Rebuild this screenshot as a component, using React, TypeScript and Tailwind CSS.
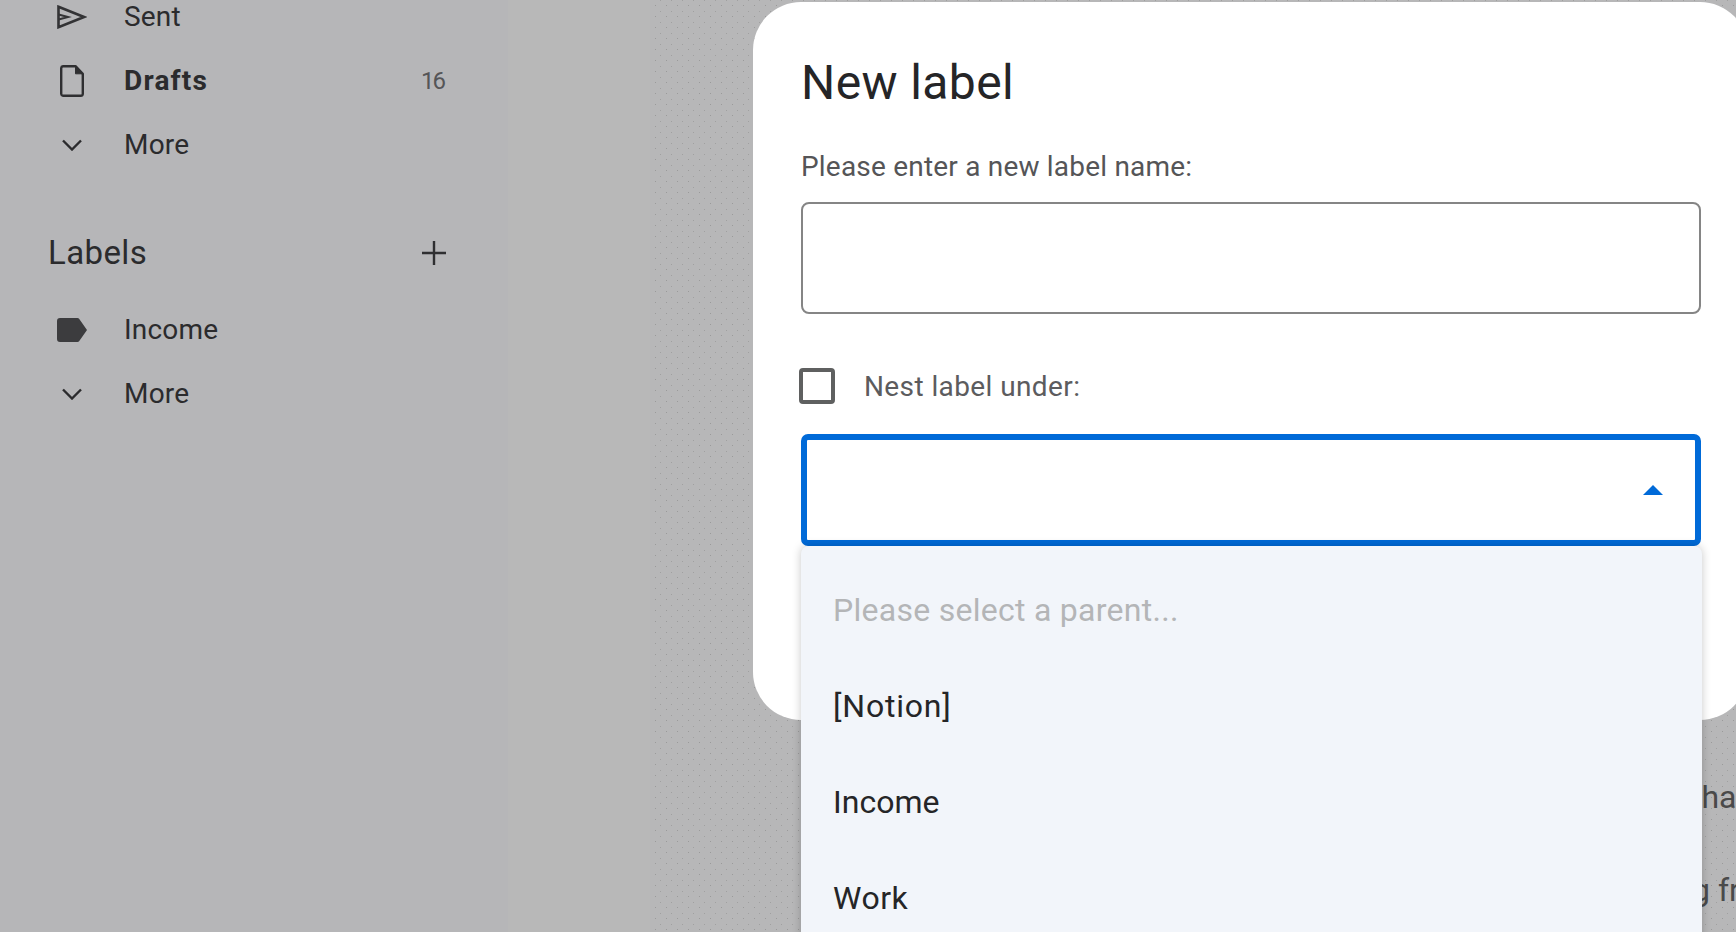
const font = "font-['Roboto','Liberation_Sans',sans-serif]";

function SentIcon() {
  return (
    <svg width="30" height="24" viewBox="0 0 30 24" fill="none" stroke="#333335" strokeWidth="2.6">
      <path d="M1.500 1.800 27 12 1.500 22.200Z" strokeLinejoin="miter" />
      <path d="M1.500 9.500 11 12 1.500 14.500" strokeWidth="2" />
    </svg>
  );
}

function DraftIcon() {
  return (
    <svg width="24" height="32" viewBox="0 0 24 32" fill="none" stroke="#2f2f31" strokeWidth="2.4">
      <path d="M3 1.200h12.500l7.300 7.600V29a2 2 0 0 1-2 1.800H3A2 2 0 0 1 1.200 29V3A2 2 0 0 1 3 1.200Z" strokeLinejoin="round" />
      <path d="M15.500 1.200v7.600h7.300" fill="#2f2f31" strokeWidth="1" />
    </svg>
  );
}

function ChevronIcon() {
  return (
    <svg width="20" height="12" viewBox="0 0 20 12" fill="none" stroke="#2b2b2d" strokeWidth="2.4">
      <path d="M1 1.500 10 10.500 19 1.500" />
    </svg>
  );
}

function PlusIcon() {
  return (
    <svg width="24" height="24" viewBox="0 0 24 24" fill="none" stroke="#2f2f31" strokeWidth="2.400">
      <path d="M12 0v24M0 12h24" />
    </svg>
  );
}

function LabelIcon() {
  return (
    <svg width="30" height="24" viewBox="0 0 30 24" fill="#3c3c3e">
      <path d="M3 0h17.500a2 2 0 0 1 1.600.8L30 12l-7.900 11.200a2 2 0 0 1-1.600.8H3a3 3 0 0 1-3-3V3a3 3 0 0 1 3-3Z" />
    </svg>
  );
}

function NavRow({ icon, label, count, bold }: { icon: React.ReactNode; label: string; count?: string; bold?: boolean }) {
  return (
    <div className="flex h-16 items-center">
      <div className="flex w-[48px] items-center justify-center">{icon}</div>
      <span className={`ml-[28px] text-[28px] text-[#2b2b2d] ${bold ? "font-bold tracking-[1.2px]" : "tracking-[0.2px]"}`}>{label}</span>
      {count && <span className="ml-auto mr-[2px] text-[24px] tracking-[-2px] text-[#555557]">{count}</span>}
    </div>
  );
}

export default function App() {
  return (
    <div className={`relative flex h-[932px] w-[1736px] overflow-hidden ${font}`}>
      <aside className="-mt-[15px] w-[508px] shrink-0 bg-[#b6b6b8] pl-[48px] pr-[62px]">
        <NavRow icon={<SentIcon />} label="Sent" />
        <NavRow icon={<DraftIcon />} label="Drafts" count="16" bold />
        <NavRow icon={<ChevronIcon />} label="More" />

        <div className="mt-[44px] flex h-16 items-center justify-between">
          <span className="text-[33px] tracking-[0.4px] text-[#2b2b2d]">Labels</span>
          <PlusIcon />
        </div>

        <div className="mt-[13px]">
          <NavRow icon={<LabelIcon />} label="Income" />
          <NavRow icon={<ChevronIcon />} label="More" />
        </div>
      </aside>

      <div className="w-[142px] shrink-0 bg-[#b8b8b8]" />

      <main className="flex-1 bg-[#b7b7b8] bg-[radial-gradient(#9a9a9a_0.7px,transparent_0.9px),radial-gradient(#a0a0a0_0.7px,transparent_0.9px)] bg-size-[11px_11px] bg-position-[0_0,5px_6px] pl-[1000px] pt-[777px] text-[32px] leading-[40px] text-[#4a4a4a]">
        <p className="whitespace-nowrap pl-[41px]">that</p>
        <p className="mt-[53px] whitespace-nowrap pl-[42px]">g from</p>
      </main>

      {/* modal */}
      <div className="absolute left-[753px] top-[2px] h-[718px] w-[995px] rounded-[48px] bg-white px-[48px]">
        <h1 className="mt-[53px] text-[48px] leading-[56px] tracking-[0.4px] text-[#252527]">New label</h1>
        <p className="mt-[38px] text-[28px] leading-[36px] tracking-[0.2px] text-[#555557]">Please enter a new label name:</p>
        <input className="mt-[17px] block h-[112px] w-[900px] rounded-[8px] border-[2.5px] border-[#858585] bg-white outline-none" />

        <div className="mt-[52px] flex h-[40px] items-center">
          <span className="-ml-[2px] h-[36px] w-[36px] rounded-[4px] border-4 border-[#5f6060]" />
          <span className="ml-[29px] pt-[2px] text-[28px] tracking-[0.4px] text-[#5c5c5e]">Nest label under:</span>
        </div>

        <div className="relative mt-[28px] w-[900px]">
          <div className="flex h-[112px] items-center justify-end rounded-[7px] border-[6px] border-[#006ad8] pr-[32px]">
            <svg width="20" height="10" viewBox="0 0 20 10" fill="#006ad8">
              <path d="M10 0 20 10H0Z" />
            </svg>
          </div>
          <ul className="absolute left-0 top-full z-10 h-[400px] w-[901px] rounded-t-[8px] bg-[#f2f5fa] pl-[32px] text-[32px] text-[#252527] shadow-[0_0_10px_rgba(0,0,0,0.22)]">
            <li className="flex h-[96px] items-center pt-[32px] tracking-[0.27px] text-[#b4b5b7]">Please select a parent...</li>
            <li className="flex h-[96px] items-center pt-[32px] tracking-[0.8px]">[Notion]</li>
            <li className="flex h-[96px] items-center pt-[32px]">Income</li>
            <li className="flex h-[96px] items-center pt-[32px] tracking-[0.5px]">Work</li>
          </ul>
        </div>
      </div>
    </div>
  );
}
